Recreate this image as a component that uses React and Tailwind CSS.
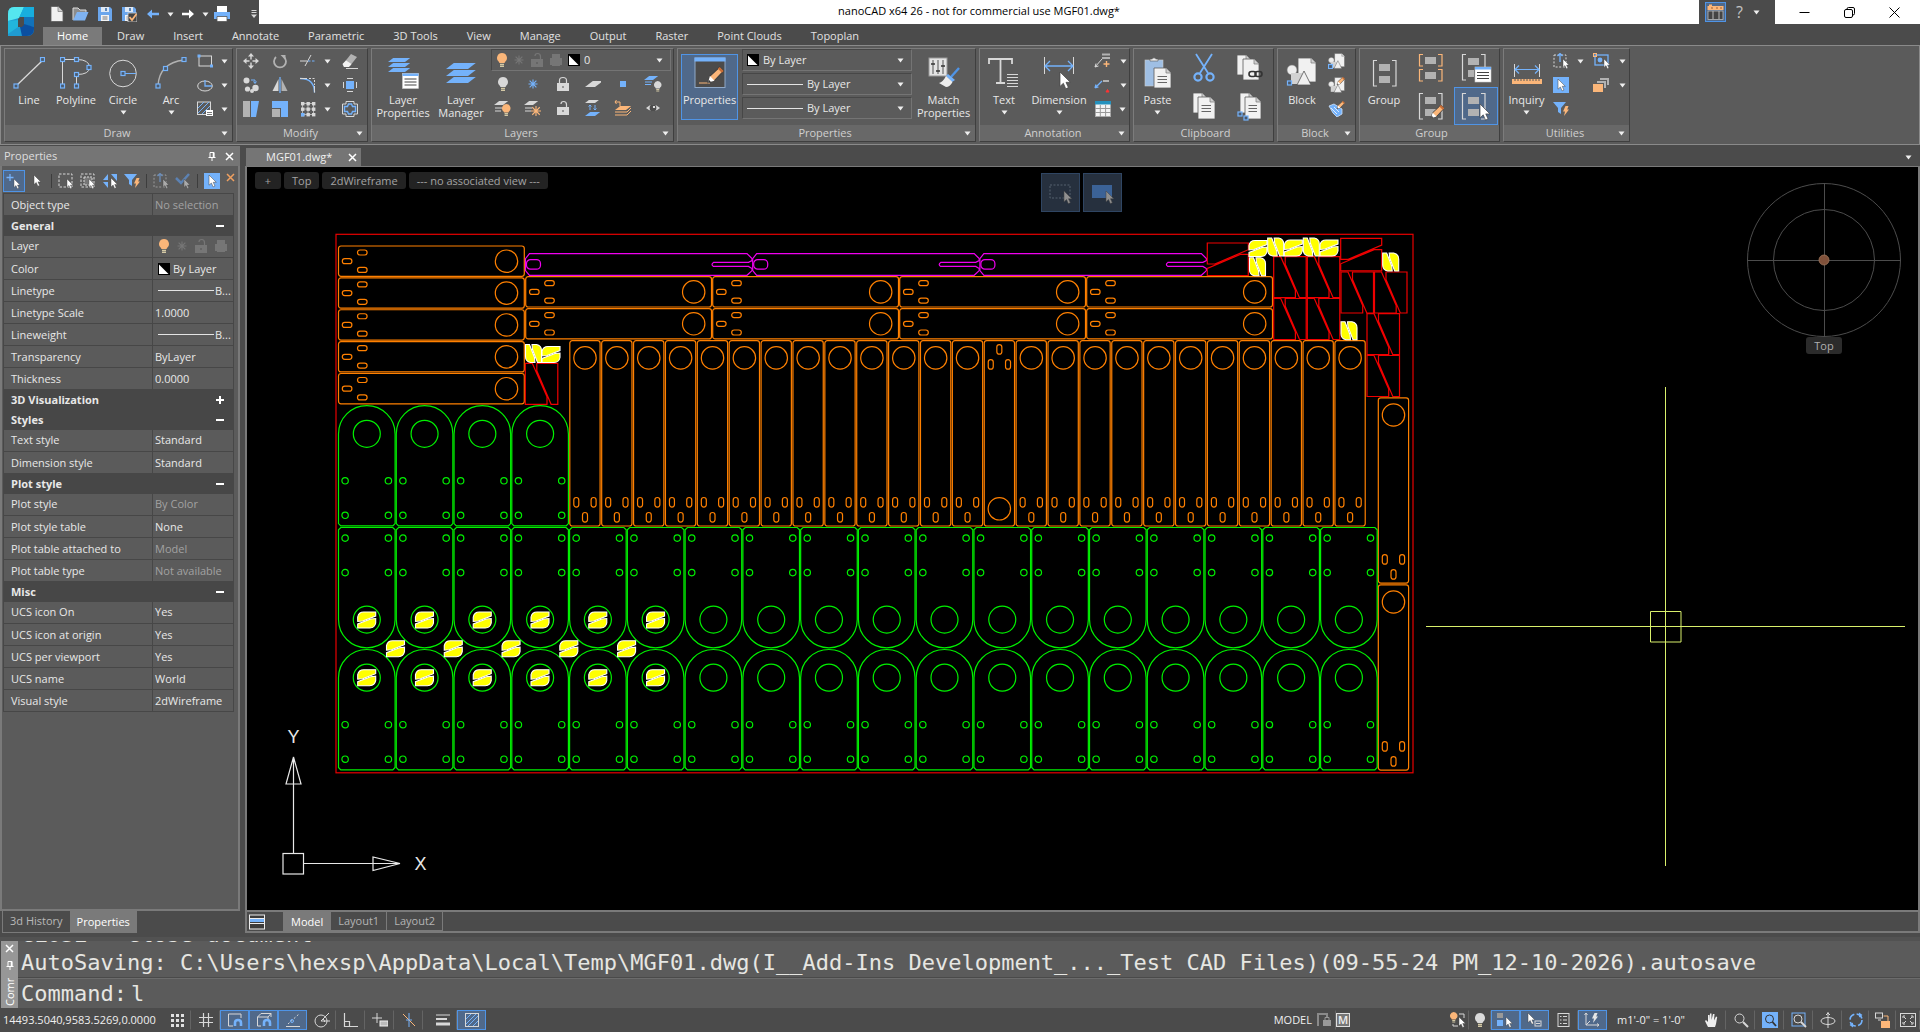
import clsx from 'clsx';

const BLUE = '#74b2fb';
const ORANGE = '#fbb679';
const LIGHT = '#d8d8d8';
const MID = '#b2b2b2';
const DIM = '#767676';

/* ---------- icon primitives ---------- */

function Svg({ w = 16, h = 16, children }) {
  return (
    <svg width={w} height={h} viewBox={`0 0 ${w} ${h}`} fill="none" stroke={LIGHT} className="shrink-0" aria-hidden="true">
      {children}
    </svg>
  );
}

const Node = ({ x, y }) => <rect x={x - 2} y={y - 2} width="4" height="4" fill="#4c5a6c" stroke={BLUE} strokeWidth="1.2" />;
const Cursor = ({ x = 0, y = 0, s = 1, fill = '#fff' }) => (
  <path transform={`translate(${x} ${y}) scale(${s})`} d="M0 0V12L2.8 9.4L4.8 14L7 13L5 8.6H8.6Z" fill={fill} stroke="#444" strokeWidth="0.6" />
);
const Page = ({ x, y, w = 16, h = 20, lines }) => (
  <g transform={`translate(${x} ${y})`}>
    <path d={`M0 0H${w - 5}L${w} 5V${h}H0Z`} fill="#f1f1f1" stroke="#5b5b5b" strokeWidth="0.8" />
    <path d={`M${w - 5} 0V5H${w}`} fill="#d0d0d0" stroke="#777" strokeWidth="0.7" />
    {lines && <path d={`M3.5 8.5H${w - 4}M3.5 11.5H${w - 4}M3.5 14.5H${w - 4}`} stroke="#666" />}
  </g>
);
const Pencil = ({ x = 0, y = 0, s = 1 }) => (
  <g transform={`translate(${x} ${y}) scale(${s})`} stroke="none">
    <path d="M0 12L1.5 7L9 0L12 3L5 10.5Z" fill={ORANGE} stroke="#3f3f3f" strokeWidth="0.8" />
    <path d="M9 0L12 3L10.6 4.4L7.6 1.4Z" fill="#c96d35" />
    <path d="M0 12L1.5 7L5 10.5Z" fill="#fff" />
    <path d="M0 12L0.6 9.8L2.2 11.4Z" fill="#333" />
  </g>
);
const Bolt = ({ x = 0, y = 0, fill = ORANGE }) => <path transform={`translate(${x} ${y})`} d="M2.5 0H5.5L4.2 3.6H6L1 10L2 5.4H0Z" fill={fill} stroke="none" />;
const ListSheet = ({ x, y }) => (
  <g transform={`translate(${x} ${y})`}>
    <rect width="16" height="15" fill="#fff" stroke="#ccc" strokeWidth="0.6" />
    <rect width="16" height="2.5" fill={BLUE} stroke="none" />
    <path d="M2 5.5H14M2 8.5H14M2 11.5H14" stroke="#444" />
  </g>
);
const Sheet = ({ x, y, w = 14, h = 4, fill = BLUE }) => <path transform={`translate(${x} ${y})`} d={`M${h * 1.3} 0H${w + h * 1.3}L${w} ${h}H0Z`} fill={fill} stroke="none" />;
const BulbShape = ({ x = 0, y = 0, s = 1, fill = ORANGE }) => (
  <g transform={`translate(${x} ${y}) scale(${s})`} stroke="none">
    <path d="M5 0A5 5 0 0 1 8.2 8.8Q7.8 9.4 7.6 10H2.4Q2.2 9.4 1.8 8.8A5 5 0 0 1 5 0Z" fill={fill} />
    <path d="M3 10.7H7V12H3ZM3 12.6H7V14H3Z" fill="#d4c9a5" />
  </g>
);
const Star = ({ x, y, r = 4.5, c }) => (
  <path transform={`translate(${x} ${y})`} d={`M0 ${-r}V${r}M${-r} 0H${r}M${-r * 0.75} ${-r * 0.75}L${r * 0.75} ${r * 0.75}M${-r * 0.75} ${r * 0.75}L${r * 0.75} ${-r * 0.75}`} stroke={c} strokeWidth="1.1" />
);

const Caret = () => (
  <svg width="7" height="5" viewBox="0 0 7 5" className="shrink-0" aria-hidden="true"><path d="M0.5 0.5H6.5L3.5 4.5Z" fill="#efefef" /></svg>
);

/* ---------- icons ---------- */

const Bulb = ({ fill }) => <Svg w={12} h={16}><BulbShape x={1} y={1} fill={fill} /></Svg>;
const Sun = ({ c = DIM }) => <Svg w={12} h={12}><Star x={6} y={6} c={c} /></Svg>;
const Lock = ({ open, c = DIM }) => (
  <Svg w={14} h={16}>
    <rect x="1" y="7" width="12" height="8" fill={c} stroke="none" />
    <path d={open ? 'M5 4Q5 1.5 7.5 1.5Q10.5 1.5 10.5 4.5V7' : 'M3.5 7V4.5Q3.5 1.5 7 1.5Q10.5 1.5 10.5 4.5V7'} stroke={c} strokeWidth="1.2" />
    <path d="M7 10V12" stroke="#555" />
  </Svg>
);
const Plot = () => <Svg w={14} h={14}><path d="M3 1H11V5H13V12H11V13H3V12H1V5H3Z" fill={DIM} stroke="none" /></Svg>;
const Swatch = () => (
  <svg width="12" height="12" viewBox="0 0 12 12" className="shrink-0" aria-hidden="true"><rect width="12" height="12" fill="#000" /><path d="M1 1.5V11H10.5Z" fill="#fff" /></svg>
);

const LineIcon = () => <Svg w={32} h={32}><path d="M3 29L30 3" strokeWidth="1.3" /><Node x={3} y={29} /><Node x={29.5} y={2.5} /></Svg>;
const PolylineIcon = () => (
  <Svg w={32} h={32}>
    <path d="M2.5 29V2.5H16.5Q29.5 2.5 29.5 10.5Q29.5 17.5 16.5 17.5V29" />
    <Node x={2.5} y={2.5} /><Node x={16.5} y={2.5} /><Node x={29} y={10.5} /><Node x={16.5} y={17.5} /><Node x={16.5} y={29} /><Node x={2.5} y={29} />
  </Svg>
);
const CircleIcon = () => <Svg w={32} h={32}><circle cx="16" cy="16.5" r="13.3" /><path d="M16 16.5H29" stroke={BLUE} /><Node x={16} y={16.5} /></Svg>;
const ArcIcon = () => <Svg w={32} h={32}><path d="M3 29Q4 6 29 3" stroke={MID} strokeWidth="1.4" /><Node x={3} y={29} /><Node x={10.5} y={11.5} /><Node x={29} y={2.5} /></Svg>;
const RectIcon = () => <Svg><rect x="2" y="3" width="12.5" height="10" /><rect x="0.5" y="1.5" width="3" height="3" fill={BLUE} stroke="none" /><rect x="13" y="11.5" width="3" height="3" fill={BLUE} stroke="none" /></Svg>;
const EllipseIcon = () => <Svg><ellipse cx="8" cy="9" rx="7.3" ry="5" /><path d="M8 3V9H15" stroke={BLUE} strokeWidth="1.3" /></Svg>;
const HatchIcon = () => (
  <Svg>
    <rect x="0.5" y="1" width="13" height="12.5" />
    <path d="M1 7L7 1M1 12L12 1M5 13L13 5" stroke={BLUE} />
    <rect x="9" y="9" width="7" height="6" fill="#fff" stroke="none" /><path d="M10 11.5H15M10 13.5H15" stroke="#555" strokeWidth="0.8" />
  </Svg>
);

const MoveIcon = () => <Svg><path d="M8 2V14M2 8H14" strokeWidth="1.4" strokeDasharray="4.5 3" /><path d="M8 0L11 3.5H5ZM8 16L11 12.5H5ZM0 8L3.5 5V11ZM16 8L12.5 5V11Z" fill={LIGHT} stroke="none" /></Svg>;
const RotateIcon = () => <Svg><path d="M4 4A6 6 0 1 0 12 4" stroke={MID} strokeWidth="1.8" /><path d="M8.5 2H13.5V7Z" fill={MID} stroke="none" /></Svg>;
const TrimIcon = () => <Svg><path d="M0 8H7M5 13L11 2" /><path d="M8 8H16" stroke={BLUE} strokeDasharray="2.5 1.5" /></Svg>;
const EraseIcon = () => <Svg><path d="M1 11L9 1L15 4L8 13L2 14Z" fill={MID} stroke="none" /><path d="M0.5 11L4 7.5L9.5 11L7 14H2Z" fill="#f2f2f2" stroke="none" /><path d="M4 15.5H16" /></Svg>;
const CopyIcon = () => <Svg><g fill={LIGHT} stroke="none"><circle cx="3.5" cy="3.5" r="3" /><circle cx="4.5" cy="12" r="2.6" /><circle cx="12.5" cy="11" r="3.2" /><circle cx="9" cy="14" r="2" /></g><path d="M8 3H12V6M10.5 4.5L12 6.5L13.5 4.5" stroke={BLUE} /></Svg>;
const MirrorIcon = () => <Svg><path d="M6.5 2V14H0.5Z" fill={LIGHT} stroke="none" /><path d="M9.5 2V14H15.5Z" fill={MID} stroke="none" /><path d="M8 0V16" stroke={BLUE} strokeWidth="1.3" /></Svg>;
const FilletIcon = () => <Svg><path d="M0 1.5Q14.5 1.5 14.5 15.5" stroke={BLUE} strokeWidth="1.4" /><path d="M0 1.5H7M14.5 9V15.5" /><path d="M9 1.5H14.5V8" strokeDasharray="2 1.5" /></Svg>;
const StretchIcon = () => <Svg><rect x="4" y="4" width="8" height="8" fill={BLUE} stroke="none" /><path d="M5 1.5H11M5 14.5H11M1.5 5V11M14.5 5V11" stroke={LIGHT} /></Svg>;
const FlexIcon = () => <Svg><rect x="0" y="0" width="7" height="16" fill={MID} stroke="none" /><path d="M8 0H16L13 16H8Z" fill={BLUE} stroke="none" /></Svg>;
const ScaleIcon = () => <Svg><path d="M0 0H16V16H9V7H0Z" fill={BLUE} stroke="none" /><rect x="0" y="8" width="8" height="8" fill={MID} stroke="none" /></Svg>;
const ArrayIcon = () => (
  <Svg>
    <path d="M2.5 2.5H13.5V13.5H2.5ZM8 2V14M2 8H14" stroke={MID} />
    <g fill={LIGHT} stroke="none">{[1, 6.5, 12].map((x) => [1, 6.5, 12].map((y) => <rect key={x + '-' + y} x={x} y={y} width="3.4" height="3.4" />))}</g>
    <rect x="1" y="12" width="3.4" height="3.4" fill={BLUE} stroke="none" />
  </Svg>
);
const OffsetIcon = () => (
  <Svg>
    <path d="M0.5 3H4V0.5H12V3H15.5V13H12V15.5H4V13H0.5Z" strokeLinejoin="round" />
    <path d="M2.5 5.5H5.5L6.5 3H9.5L10.5 5.5H13.5V10.5H10.5L9.5 13H6.5L5.5 10.5H2.5Z" stroke={BLUE} strokeWidth="1.4" />
  </Svg>
);

const LayerPropsIcon = () => <Svg w={32} h={32}><Sheet x={1} y={11} w={17} h={4} /><Sheet x={1} y={6} w={17} h={4} /><Sheet x={1} y={1} w={17} h={4} /><ListSheet x={15.5} y={16.5} /></Svg>;
const LayerManagerIcon = () => <Svg w={32} h={32}><Sheet x={1} y={20} w={22} h={6} /><Sheet x={1} y={13} w={22} h={6} /><Sheet x={1} y={6} w={22} h={6} /></Svg>;
const FrozenSheet = () => <Svg><Sheet x={0} y={5} w={10} h={6} fill={LIGHT} /></Svg>;
const SquareDot = () => <Svg><rect x="5" y="5" width="6" height="6" fill={BLUE} stroke="none" /></Svg>;
const LayerBulb = () => <Svg w={18} h={18}><Sheet x={0} y={1} w={9} h={4} /><path d="M1 7H8M1 9.5H7" stroke={BLUE} /><BulbShape x={10} y={6} s={0.75} fill={LIGHT} /></Svg>;
const LayerOn = () => <Svg w={18} h={18}><Sheet x={0} y={2} w={9} h={4} fill={LIGHT} /><path d="M1 9H8M1 12H7" /><BulbShape x={8} y={5} s={0.85} /></Svg>;
const LayerThaw = () => <Svg w={18} h={18}><Sheet x={0} y={2} w={9} h={4} fill={LIGHT} /><path d="M1 9H8M1 12H7" /><Star x={12} y={12} r={5} c={ORANGE} /></Svg>;
const LayerSwap = () => <Svg w={16} h={18}><Sheet x={0} y={1} w={10} h={3} fill={LIGHT} /><Sheet x={0} y={13} w={10} h={4} /><path d="M5 11V6M3.5 7.5L5 6L6.5 7.5M10 6V11M8.5 9.5L10 11L11.5 9.5" stroke={BLUE} /></Svg>;
const LayerBack = () => <Svg w={18} h={18}><path d="M1 3H6V7M2.5 1L1 3L2.5 5" stroke={ORANGE} /><Sheet x={1} y={7} w={11} h={4} fill={ORANGE} /><path d="M1 13H13L17 9M1 16H13L17 12" stroke={ORANGE} /></Svg>;
const Eye = () => <Svg><path d="M1 8Q8 1.5 15 8Q8 14.5 1 8Z" fill={LIGHT} stroke="none" /><circle cx="8" cy="8" r="3.4" fill="#4c4c4c" stroke="none" /><circle cx="9" cy="7" r="1.1" fill="#fff" stroke="none" /></Svg>;

const PropertiesIcon = () => <Svg w={32} h={32}><rect x="1" y="1" width="30" height="29.5" fill="#4b4b4b" stroke="#8fa9c8" /><rect x="0.5" y="0.5" width="31" height="4" fill={BLUE} stroke="none" /><path d="M5 26H16" stroke={ORANGE} /><Pencil x={14} y={10} s={1.3} /></Svg>;
const MatchIcon = () => (
  <Svg w={32} h={32}>
    <rect x="1" y="1" width="18" height="18" fill="#e4e4e4" stroke="#999" />
    <path d="M5 3V17M10 3V17M15 3V17" stroke="#555" /><path d="M3 7H7M8 14H12M13 9H17" stroke="#333" strokeWidth="1.6" />
    <path d="M31 11L23 20" stroke="#4f94e6" strokeWidth="2.4" /><path d="M20 17L27 23L24 25L18 19Z" fill={BLUE} stroke="none" /><path d="M18 19L24.5 25Q22 30 18 30L11 26Q15 25 18 19Z" fill="#eee" stroke="none" />
  </Svg>
);
const TextIcon = () => <Svg w={32} h={32}><path d="M1 7V2H24V7M12.5 2V26M8 26H17" stroke={LIGHT} strokeWidth="1.8" /><path d="M19 17.5H30M19 20.5H30M19 23.5H30M19 26.5H30M19 29.5H30" /></Svg>;
const DimensionIcon = () => <Svg w={32} h={32}><path d="M1.5 0V17M30.5 0V17" /><path d="M2 9H30M7 4L2 9L7 14M25 4L30 9L25 14" stroke={BLUE} strokeWidth="1.3" /><Cursor x={17} y={15} s={1.2} /></Svg>;
const LeaderAdd = () => <Svg w={18}><path d="M1 14L8 6M1 14L2 10.5M1 14L4.5 13" /><path d="M8 5H16M8 1.5H16" stroke={MID} strokeWidth="2" /><path d="M12.5 8V14M9.5 11H15.5" stroke={ORANGE} strokeWidth="1.4" /></Svg>;
const Leader = () => <Svg w={18}><path d="M1 11L8 4M1 11L2 7.5M1 11L4.5 10" stroke={BLUE} strokeWidth="1.3" /><path d="M9 4H15" stroke={MID} strokeWidth="2" /><path d="M12 15L13.5 12.5L15 15Z" fill="#f33" stroke="#f33" /></Svg>;
const TableIcon = () => <Svg><rect x="0.5" y="0.5" width="15" height="15" fill="#f4f4f4" stroke="#aaa" /><rect x="0" y="0" width="16" height="3.5" fill="#2491bd" stroke="none" /><path d="M0 7.5H16M0 11.5H16M5.3 4V16M10.6 4V16" stroke="#999" /></Svg>;

const PasteIcon = () => <Svg w={32} h={32}><rect x="3" y="3" width="18" height="26" fill="#9fbfe4" stroke="#ccc" strokeWidth="0.6" /><path d="M8 4H16V2H14Q12 -0.5 10 2H8Z" fill="#eee" stroke="#555" strokeWidth="0.6" /><Page x={12} y={11} w={17} h={20} lines /></Svg>;
const CutIcon = () => <Svg w={26} h={30}><path d="M5 1L17 20M21 1L9 20" stroke={BLUE} strokeWidth="1.8" /><circle cx="7" cy="24" r="3.6" stroke={BLUE} strokeWidth="2.2" /><circle cx="19" cy="24" r="3.6" stroke={BLUE} strokeWidth="2.2" /></Svg>;
const CopyLink = () => <Svg w={28} h={30}><Page x={1} y={2} w={14} h={20} /><Page x={7} y={6} w={16} h={21} /><rect x="13" y="18.5" width="7" height="5" rx="2.5" stroke="#333" strokeWidth="1.6" /><rect x="19" y="18.5" width="7" height="5" rx="2.5" stroke="#333" strokeWidth="1.6" /></Svg>;
const CopyClip = () => <Svg w={26} h={30}><Page x={2} y={2} w={14} h={20} /><Page x={7} y={6} w={17} h={22} lines /></Svg>;
const CopyBase = () => <Svg w={28} h={30}><Page x={4} y={2} w={14} h={20} /><Page x={9} y={6} w={16} h={22} lines /><Node x={4} y={23} /><Node x={10} y={27} /></Svg>;
const BlockShapes = ({ s = 1 }) => (
  <g transform={`scale(${s})`}>
    <Page x={12} y={1} w={18} h={24} />
    <circle cx="6" cy="13" r="5" fill="#ededed" stroke="#777" strokeWidth="0.6" /><path d="M5 16H16V27H5Z" fill="#d2d2d2" stroke="none" /><path d="M18 14L25 28H11Z" fill="#f0f0f0" stroke="#555" strokeWidth="0.8" />
  </g>
);
const BlockIcon = () => <Svg w={32} h={32}><BlockShapes /><Node x={3.5} y={26} /></Svg>;
const BlockInsert = () => <Svg w={18}><BlockShapes s={0.55} /><Node x={2.5} y={13.5} /></Svg>;
const BlockEdit = () => <Svg w={18}><BlockShapes s={0.55} /><Pencil x={9} y={0} s={0.65} /></Svg>;
const BlockAttr = () => <Svg w={18}><path d="M1 5L6 3L14 8V13L9 16L5 12Z" fill={BLUE} stroke="#cfe3fb" strokeWidth="0.8" /><path d="M3 7L9 13M6 6L11 11" stroke="#dcebff" /><Pencil x={9} y={0} s={0.65} /></Svg>;
const Brackets = ({ c = LIGHT, w = 23, h = 26 }) => <path d={`M4 0.5H0.5V${h}H4M${w - 4} 0.5H${w}V${h}H${w - 4}`} stroke={c} strokeWidth="1.2" />;
const GroupIcon = () => <Svg w={32} h={32}><g transform="translate(5 3)"><Brackets /><path d="M6 4H17V11H6ZM6 16H17V23H6Z" fill={MID} stroke="none" /></g></Svg>;
const Ungroup = () => <Svg w={26} h={30}><g transform="translate(1 1)"><Brackets c={ORANGE} h={12} /><path d="M6 3H17V10H6Z" fill={MID} stroke="none" /></g><g transform="translate(1 16)"><Brackets c={ORANGE} h={12} /><path d="M6 3H17V10H6Z" fill={MID} stroke="none" /></g></Svg>;
const GroupEdit = () => <Svg w={26} h={30}><g transform="translate(1 2)"><Brackets /><path d="M6 4H17V11H6ZM6 16H17V23H6Z" fill={MID} stroke="none" /></g><Pencil x={13} y={14} s={1.1} /></Svg>;
const GroupList = () => <Svg w={32} h={30}><g transform="translate(2 1)"><Brackets /><path d="M6 4H17V11H6ZM6 16H12V23H6Z" fill={MID} stroke="none" /></g><ListSheet x={15} y={14} /></Svg>;
const GroupSelect = () => <Svg w={32} h={30}><g transform="translate(2 2)"><Brackets /><path d="M6 4H17V11H6ZM6 16H17V23H6Z" fill={MID} stroke="none" /></g><Cursor x={20} y={13} s={1.15} /></Svg>;
const InquiryIcon = () => <Svg w={32} h={32}><path d="M3.5 7V20M28.5 7V20" /><path d="M4 12.5H28M8 8.5L4 12.5L8 16.5M24 8.5L28 12.5L24 16.5" stroke={BLUE} strokeWidth="1.2" /><rect x="1" y="22" width="30" height="5" fill={ORANGE} stroke="none" /><path d="M4 22V24M7 22V24M10 22V24M13 22V24M16 22V24M19 22V24M22 22V24M25 22V24M28 22V24" stroke="#5b5b5b" /></Svg>;
const SelectUp = ({ dim }) => <Svg><rect x="1" y="2" width="12" height="12" stroke={dim ? '#999' : LIGHT} strokeDasharray="2 1.6" /><path d="M7 9V0M4.5 3L7 0.5L9.5 3" stroke={dim ? '#6b8db8' : BLUE} strokeWidth="1.3" /><Cursor x={10} y={6} s={0.7} fill={dim ? '#aaa' : '#fff'} /></Svg>;
const SelectBox = () => <Svg><rect width="16" height="16" fill={BLUE} stroke="none" /><Cursor x={5} y={2} s={0.85} /></Svg>;
const FilterBolt = () => <Svg><path d="M0 1H13L8 7V13L5 11V7Z" fill={BLUE} stroke="none" /><Bolt x={10} y={5} /></Svg>;
const SelectRect = () => <Svg w={18}><rect x="2" y="2" width="13" height="10" stroke={BLUE} strokeWidth="1.3" /><rect x="0.5" y="0.5" width="3" height="3" stroke={ORANGE} /><circle cx="7" cy="7" r="2.4" fill={BLUE} stroke="none" /><Cursor x={11} y={6} s={0.7} /></Svg>;
const Order = () => <Svg w={18}><path d="M7 1H16V8H14V3H7Z" fill={MID} stroke="none" /><path d="M4 4H13V11H11V6H4Z" fill={MID} stroke="none" /><rect x="0" y="7" width="10" height="8" fill={ORANGE} stroke="none" /></Svg>;

/* ---------- ribbon ---------- */

function Big({ icon: Icon, label, lines, caret, active, className }) {
  return (
    <button className={clsx('flex flex-col items-center', active ? 'border border-[#4f94e6] bg-[#50698a] pt-[2px]' : 'pt-2', className)}>
      <Icon />
      <span className="mt-1 whitespace-nowrap leading-[13px]">
        {lines ? lines.map((l) => <span key={l} className="block">{l}</span>) : label}
      </span>
      {caret && <span className="flex h-[13px] items-center"><Caret /></span>}
    </button>
  );
}

function Cell({ icon: Icon, name, caret, className, ...rest }) {
  return (
    <button title={name} aria-label={name} className={clsx('flex items-center justify-center', className || 'h-6')}>
      <Icon {...rest} />
      {caret && <span className="ml-2"><Caret /></span>}
    </button>
  );
}

function Panel({ title, more = true, className, children }) {
  return (
    <section className={clsx('flex shrink-0 flex-col border border-[#3f3f3f] border-l-[#7c7c7c] border-t-[#7c7c7c]', className)}>
      <div className="flex h-[77px]">{children}</div>
      <div className="flex h-4 items-center bg-[#686868] pr-1 text-[#cfcfcf]">
        <h2 className="flex-1 pl-2 text-center">{title}</h2>
        {more && <Caret />}
      </div>
    </section>
  );
}

function Combo({ name, value, before }) {
  return (
    <div className="flex h-[22px] items-center gap-1 border border-[#747474] border-l-[#474747] border-t-[#474747] px-1">
      {before}
      <select aria-label={name} className="min-w-0 flex-1 appearance-none bg-transparent text-[#e8e8e8] outline-none">
        <option>{value}</option>
      </select>
      <span className="px-[3px]"><Caret /></span>
    </div>
  );
}

const Rule = ({ className }) => <span className={clsx('h-px shrink-0 bg-[#e4e4e4]', className)} />;

function Ribbon() {
  return (
    <div className="flex h-[100px] shrink-0 gap-[3px] border border-[#8a8a8a] bg-[#5b5b5b] py-[2px] pl-[3px]">
      <Panel title="Draw" className="w-[229px]">
        <Big icon={LineIcon} label="Line" className="w-12" />
        <Big icon={PolylineIcon} label="Polyline" className="w-[46px]" />
        <Big icon={CircleIcon} label="Circle" caret className="w-12" />
        <Big icon={ArcIcon} label="Arc" caret className="w-12" />
        <div className="flex flex-col pl-[2px]">
          <Cell icon={RectIcon} name="Rectangle" caret />
          <Cell icon={EllipseIcon} name="Ellipse" caret />
          <Cell icon={HatchIcon} name="Hatch" caret />
        </div>
      </Panel>

      <Panel title="Modify" className="w-[132px]">
        <div className="grid grid-cols-[28px_30px_40px_30px] content-start">
          <Cell icon={MoveIcon} name="Move" />
          <Cell icon={RotateIcon} name="Rotate" />
          <Cell icon={TrimIcon} name="Trim" caret />
          <Cell icon={EraseIcon} name="Erase" />
          <Cell icon={CopyIcon} name="Copy" />
          <Cell icon={MirrorIcon} name="Mirror" />
          <Cell icon={FilletIcon} name="Fillet" caret />
          <Cell icon={StretchIcon} name="Explode" />
          <Cell icon={FlexIcon} name="Stretch" />
          <Cell icon={ScaleIcon} name="Scale" />
          <Cell icon={ArrayIcon} name="Array" caret />
          <Cell icon={OffsetIcon} name="Offset" />
        </div>
      </Panel>

      <Panel title="Layers" className="w-[303px]">
        <Big icon={LayerPropsIcon} lines={['Layer', 'Properties']} className="w-[62px]" />
        <Big icon={LayerManagerIcon} lines={['Layer', 'Manager']} className="w-[54px]" />
        <div className="flex flex-1 flex-col pr-[2px]">
          <div className="pl-[3px]">
            <Combo
              name="Current layer"
              value="0"
              before={<span className="flex items-center gap-[5px]"><Bulb fill={ORANGE} /><Sun /><Lock open /><Plot /><Swatch /></span>}
            />
          </div>
          <div className="grid grid-cols-[repeat(6,30px)] pt-px">
            <Cell icon={Bulb} name="Layer off" fill={LIGHT} />
            <Cell icon={Sun} name="Freeze" c={BLUE} />
            <Cell icon={Lock} name="Lock" c={LIGHT} />
            <Cell icon={FrozenSheet} name="Isolate" />
            <Cell icon={SquareDot} name="Make current" />
            <Cell icon={LayerBulb} name="Turn off others" />
            <Cell icon={LayerOn} name="All on" />
            <Cell icon={LayerThaw} name="Thaw all" />
            <Cell icon={Lock} name="Unlock" open c={LIGHT} />
            <Cell icon={LayerSwap} name="Match layer" />
            <Cell icon={LayerBack} name="Previous" />
            <Cell icon={Eye} name="Walk" />
          </div>
        </div>
      </Panel>

      <Panel title="Properties" className="w-[299px]">
        <div className="flex py-[5px] pl-[3px] pr-1">
          <Big icon={PropertiesIcon} label="Properties" active className="w-[57px]" />
        </div>
        <div className="flex w-[170px] flex-col gap-[2px]">
          <Combo name="Color" value="By Layer" before={<Swatch />} />
          <Combo name="Linetype" value="By Layer" before={<Rule className="w-14" />} />
          <Combo name="Lineweight" value="By Layer" before={<Rule className="w-14" />} />
        </div>
        <Big icon={MatchIcon} lines={['Match', 'Properties']} className="flex-1" />
      </Panel>

      <Panel title="Annotation" className="w-[151px]">
        <Big icon={TextIcon} label="Text" caret className="w-12" />
        <Big icon={DimensionIcon} label="Dimension" caret className="w-[62px]" />
        <div className="flex flex-col pl-1">
          <Cell icon={LeaderAdd} name="Multileader" caret />
          <Cell icon={Leader} name="Leader" caret />
          <Cell icon={TableIcon} name="Table" caret />
        </div>
      </Panel>

      <Panel title="Clipboard" more={false} className="w-[141px]">
        <Big icon={PasteIcon} label="Paste" caret className="w-12" />
        <div className="grid grid-cols-[46px_46px] grid-rows-2">
          <Cell icon={CutIcon} name="Cut" className="h-[38px]" />
          <Cell icon={CopyLink} name="Copy link" className="h-[38px]" />
          <Cell icon={CopyClip} name="Copy clip" className="h-[38px]" />
          <Cell icon={CopyBase} name="Copy with base point" className="h-[38px]" />
        </div>
      </Panel>

      <Panel title="Block" className="w-[79px]">
        <Big icon={BlockIcon} label="Block" className="w-12" />
        <div className="flex flex-col pl-[2px]">
          <Cell icon={BlockInsert} name="Insert block" />
          <Cell icon={BlockEdit} name="Edit block" />
          <Cell icon={BlockAttr} name="Edit attributes" />
        </div>
      </Panel>

      <Panel title="Group" more={false} className="w-[141px]">
        <Big icon={GroupIcon} label="Group" className="w-12" />
        <div className="grid grid-cols-[46px_44px] grid-rows-2">
          <Cell icon={Ungroup} name="Ungroup" className="h-[38px]" />
          <Cell icon={GroupList} name="Group manager" className="h-[38px]" />
          <Cell icon={GroupEdit} name="Edit group" className="h-[38px]" />
          <Cell icon={GroupSelect} name="Group selection" className="h-[38px] border border-[#4f94e6] bg-[#50698a]" />
        </div>
      </Panel>

      <Panel title="Utilities" className="w-[127px]">
        <Big icon={InquiryIcon} label="Inquiry" caret className="w-12" />
        <div className="grid grid-cols-[40px_36px] content-start justify-items-start pl-1">
          <Cell icon={SelectUp} name="Select" caret />
          <Cell icon={SelectRect} name="Quick select" caret />
          <Cell icon={SelectBox} name="Selection mode" />
          <Cell icon={Order} name="Draw order" caret />
          <Cell icon={FilterBolt} name="Filter" />
        </div>
      </Panel>
    </div>
  );
}

/* ---------- title bar and tabs ---------- */

const TABS = ['Home', 'Draw', 'Insert', 'Annotate', 'Parametric', '3D Tools', 'View', 'Manage', 'Output', 'Raster', 'Point Clouds', 'Topoplan'];

const Logo = () => (
  <svg width="26" height="29" viewBox="0 0 26 29" aria-hidden="true">
    <path d="M6 0H26V22Q26 29 19 29H0V7Q0 0 6 0Z" fill="#1f9bd1" />
    <path d="M6 0H16L11 11L0 14V7Q0 0 6 0Z" fill="#55e6ef" />
    <path d="M16 0H26V12L16 10L11 11Z" fill="#17aede" />
    <path d="M26 10V20L16 18V10Z" fill="#1272b9" />
    <path d="M26 20V22Q26 29 19 29H14L12 20L16 17Z" fill="#0b4fa0" />
    <path d="M0 14L10 13V20L0 27Z" fill="#22b6dc" />
    <path d="M12 10H16V18L14 20H10V12Z" fill="#4b4b4b" />
  </svg>
);
const Floppy = ({ check }) => (
  <Svg>
    <path d="M1 1H13L15 3V15H1Z" fill="#6ba6ec" stroke="none" /><rect x="4" y="1" width="8" height="5" fill="#dfe9f5" stroke="none" /><path d="M9 2V5" stroke="#3c6ea8" strokeWidth="1.6" />
    <rect x="4" y="9" width="8" height="6" fill="#f4f4f4" stroke="none" /><path d="M5.5 11H10.5M5.5 13H10.5" stroke="#777" />
    {check && <g><rect x="7" y="7" width="9" height="9" fill="#444" stroke={LIGHT} strokeWidth="0.8" /><path d="M8.5 11L11 14L15.5 8" stroke={ORANGE} strokeWidth="1.8" /></g>}
  </Svg>
);

function TopBar() {
  return (
    <header className="flex h-[45px] shrink-0 bg-[#4b4b4b]">
      <div className="flex w-[43px] justify-start pl-2 pt-[7px]"><Logo /></div>
      <div className="flex min-w-0 flex-1 flex-col">
        <div className="flex h-6">
          <div className="flex w-[216px] items-center pl-[6px] pt-1">
            <button aria-label="New"><Svg><Page x={2} y={0.5} w={12} h={15} /></Svg></button>
            <button aria-label="Open" className="ml-[7px]"><Svg w={17}><path d="M1 14V2H6L8 4H14V6" fill="#8c8c8c" stroke="#ddd" /><path d="M1 14.5L5 6H16.5L13 14.5Z" fill="#7fb3f2" stroke="none" /></Svg></button>
            <button aria-label="Save" className="ml-2"><Floppy /></button>
            <button aria-label="Save as" className="ml-2"><Floppy check /></button>
            <button aria-label="Undo" className="ml-[10px]"><Svg w={12}><path d="M0 8L5 3.5V6.8H12V9.2H5V12.5Z" fill={BLUE} stroke="none" /></Svg></button>
            <button aria-label="Undo list" className="ml-2"><Caret /></button>
            <button aria-label="Redo" className="ml-2"><Svg w={12}><path d="M12 8L7 3.5V6.8H0V9.2H7V12.5Z" fill="#fff" stroke="none" /></Svg></button>
            <button aria-label="Redo list" className="ml-2"><Caret /></button>
            <button aria-label="Print" className="ml-[5px]"><Svg><path d="M3 0H13V7H3Z" fill="#fff" stroke="none" /><path d="M0 6H16V13H0Z" fill={BLUE} stroke="none" /><path d="M3 10.5H13V15.5H3Z" fill="#fff" stroke="#555" strokeWidth="0.8" /></Svg></button>
            <button aria-label="Customize" className="ml-auto pr-[2px]"><Svg w={6} h={10}><path d="M0.5 1.5H5.5M0.5 3.5H5.5" /><path d="M0 5.5H6L3 9Z" fill={LIGHT} stroke="none" /></Svg></button>
          </div>
          <h1 className="flex flex-1 items-center justify-center bg-white pb-[2px] text-[11px] text-black">nanoCAD x64 26 - not for commercial use MGF01.dwg*</h1>
          <div className="flex w-[76px] items-center gap-[10px] pl-[6px]">
            <button aria-label="Ribbon" className="border border-[#4f94e6] bg-[#50698a] p-px">
              <Svg w={17} h={16}><rect x="1" y="7" width="15" height="8.5" fill="#444" stroke="#bbb" strokeWidth="0.8" /><path d="M6 7V15M12 7V15" stroke="#bbb" /><path d="M0.5 2H2V0.5H5V2H16.5V6H0.5Z" fill={ORANGE} stroke="none" /><path d="M4 4H6M9 4H11M13 4H15" stroke="#a15f2c" /></Svg>
            </button>
            <button className="text-base text-[#c4c4c4]">?</button>
            <button aria-label="Help menu"><Caret /></button>
          </div>
          <div className="flex w-[145px] items-center justify-between bg-white pl-6 pr-5 text-black">
            <button aria-label="Minimize"><svg width="11" height="11" viewBox="0 0 11 11"><path d="M0.5 5.5H10.5" stroke="#000" /></svg></button>
            <button aria-label="Restore"><svg width="11" height="11" viewBox="0 0 11 11" fill="none" stroke="#000"><rect x="0.5" y="2.5" width="8" height="8" rx="1.5" /><path d="M3 2.5V2Q3 0.5 4.5 0.5H9Q10.5 0.5 10.5 2V6.5Q10.5 8 9 8" /></svg></button>
            <button aria-label="Close"><svg width="11" height="11" viewBox="0 0 11 11"><path d="M0.5 0.5L10.5 10.5M10.5 0.5L0.5 10.5" stroke="#000" /></svg></button>
          </div>
        </div>
        <nav className="flex h-[21px] items-end gap-px">
          {TABS.map((t, i) => (
            <button key={t} className={clsx('h-[18px] px-[14px] leading-[18px]', i === 0 ? 'bg-[#7a7a7a] text-white' : 'text-[#e2e2e2]')}>{t}</button>
          ))}
        </nav>
      </div>
    </header>
  );
}

/* ---------- properties palette ---------- */

const LayerValue = () => <span className="flex items-center gap-[6px] pl-[3px]"><Bulb fill={ORANGE} /><Sun /><Lock open /><Plot /></span>;
const ColorValue = () => <span className="flex items-center gap-[3px] pl-[3px]"><Swatch />By Layer</span>;
const LineValue = () => <span className="flex items-center gap-px pl-[3px]"><Rule className="w-14" />B...</span>;

const GROUPS = [
  { title: 'General', rows: [['Layer', <LayerValue />], ['Color', <ColorValue />], ['Linetype', <LineValue />], ['Linetype Scale', '1.0000'], ['Lineweight', <LineValue />], ['Transparency', 'ByLayer'], ['Thickness', '0.0000']] },
  { title: '3D Visualization', closed: true, rows: [] },
  { title: 'Styles', rows: [['Text style', 'Standard'], ['Dimension style', 'Standard']] },
  { title: 'Plot style', rows: [['Plot style', 'By Color', true], ['Plot style table', 'None'], ['Plot table attached to', 'Model', true], ['Plot table type', 'Not available', true]] },
  { title: 'Misc', rows: [['UCS icon On', 'Yes'], ['UCS icon at origin', 'Yes'], ['UCS per viewport', 'Yes'], ['UCS name', 'World'], ['Visual style', '2dWireframe']] },
];

function Row({ name, value, dim }) {
  return (
    <tr className="h-[22px] border-b border-[#474747]">
      <th scope="row" className="border-r border-[#474747] p-0 pl-[7px] text-left font-normal">{name}</th>
      <td className={clsx('whitespace-nowrap border-r border-[#474747] p-0 pl-[2px]', dim && 'text-[#a2a2a2]')}>{value}</td>
    </tr>
  );
}

const Pin = () => <svg width="8" height="9" viewBox="0 0 8 9" fill="none" stroke="#fff"><path d="M2 0.5H6V5.5M2 0.5V5.5M0.5 5.5H7.5M4 6V9" /><path d="M5.5 0.5V5.5" strokeWidth="1.5" /></svg>;
const Cross = ({ c = '#fff' }) => <svg width="9" height="9" viewBox="0 0 9 9"><path d="M1 1L8 8M8 1L1 8" stroke={c} strokeWidth="1.5" /></svg>;
const Bar = () => <span className="h-[14px] w-px shrink-0 bg-[#3d3d3d]" />;

function Sidebar() {
  return (
    <aside className="flex w-[240px] shrink-0 flex-col">
      <div className="flex h-5 items-center gap-[9px] bg-[#757575] pl-1 pr-[6px] text-[#dedede]">
        <h2 className="flex-1">Properties</h2>
        <button aria-label="Pin"><Pin /></button>
        <button aria-label="Close palette"><Cross /></button>
      </div>
      <div className="flex flex-1 flex-col border-x-2 border-b-2 border-[#7a7a7a] bg-[#5b5b5b] pt-[3px]">
        <div className="flex h-6 items-center gap-[6px] pl-px">
          <button aria-label="Add to selection" className="flex h-[22px] w-[22px] shrink-0 items-center justify-center border border-[#4f94e6] bg-[#50698a]"><Svg><path d="M4 1V8M0.5 4.5H7.5" stroke={BLUE} strokeWidth="1.3" /><Cursor x={8} y={6} s={0.7} /></Svg></button>
          <button aria-label="Pick" className="-ml-[2px]"><Svg><Cursor x={5} y={2} s={0.8} /></Svg></button>
          <Bar />
          <button aria-label="Window select"><Svg><rect x="1" y="1" width="13" height="13" strokeDasharray="2.5 1.5" /><Cursor x={9} y={6} s={0.7} /></Svg></button>
          <button aria-label="Crossing select"><Svg><rect x="1" y="1" width="13" height="13" strokeDasharray="2.5 1.5" /><rect x="4" y="4" width="8" height="8" fill="#777" strokeDasharray="2 1" /><Cursor x={9} y={6} s={0.7} /></Svg></button>
          <button aria-label="Invert selection"><Svg><path d="M6 1V7L1 7ZM1 9H6V15ZM9 1H15V8Z" fill={BLUE} stroke="none" /><Cursor x={9} y={5} s={0.75} /></Svg></button>
          <button aria-label="Quick filter"><FilterBolt /></button>
          <Bar />
          <button aria-label="Select previous"><SelectUp dim /></button>
          <button aria-label="Apply"><Svg><path d="M1 5L6 10L14 1" stroke="#5c82b3" strokeWidth="2.5" /><Cursor x={9} y={6} s={0.7} fill="#aaa" /></Svg></button>
          <Bar />
          <button aria-label="Selection mode"><SelectBox /></button>
          <button aria-label="Clear selection" className="self-start pt-1"><Cross c="#f0a060" /></button>
        </div>
        <table className="mx-px w-[231px] table-fixed border-collapse border-l border-t border-[#474747] leading-4 text-[#e8e8e8]">
          <colgroup><col className="w-[149px]" /><col /></colgroup>
          <tbody><Row name="Object type" value="No selection" dim /></tbody>
          {GROUPS.map((g) => (
            <tbody key={g.title}>
              <tr className="h-5 bg-[#474747]">
                <th scope="rowgroup" className="p-0 pl-[7px] text-left font-bold">{g.title}</th>
                <td className="p-0 pr-[10px]">
                  <button aria-label={`Toggle ${g.title}`} className="ml-auto block">
                    <svg width="8" height="8" viewBox="0 0 8 8" stroke="#fff" strokeWidth="2"><path d={g.closed ? 'M0 4H8M4 0V8' : 'M0 4H8'} /></svg>
                  </button>
                </td>
              </tr>
              {g.rows.map(([name, value, dim]) => <Row key={name} name={name} value={value} dim={dim} />)}
            </tbody>
          ))}
        </table>
      </div>
      <div className="flex h-[22px] pl-[2px]">
        <button className="border-b border-l border-[#7a7a7a] px-[7px] text-[#b9b9b9]">3d History</button>
        <button className="bg-[#7a7a7a] px-[7px] text-white">Properties</button>
      </div>
    </aside>
  );
}

/* ---------- nesting layout on the drawing area ---------- */

const OR = '#ff8000';
const GR = '#00f000';
const PITCH = 57.77;
const STRIP = 31.88;
const range = (n) => Array.from({ length: n }, (_, i) => i);

// flat strip, hole on the right, three slots on the left
const Strip = ({ x, y }) => (
  <g transform={`translate(${x} ${y})`}>
    <rect width="185.8" height="30.3" rx="2.5" />
    <circle cx="168" cy="15.2" r="11.2" />
    <rect x="3.8" y="12.7" width="9.6" height="5" rx="2.5" />
    <rect x="19" y="4" width="9.6" height="5" rx="2.5" />
    <rect x="19" y="21.4" width="9.6" height="5" rx="2.5" />
  </g>
);
const Upright = ({ x, y, flip }) => (
  <g transform={flip ? `translate(${x + 30.3} ${y + 185.3}) rotate(180)` : `translate(${x} ${y})`}>
    <rect width="30.3" height="185.3" rx="2.5" />
    <circle cx="15.2" cy="17.2" r="11.2" />
    <rect x="4" y="156.8" width="5" height="9.6" rx="2.5" />
    <rect x="21.3" y="156.8" width="5" height="9.6" rx="2.5" />
    <rect x="12.7" y="171.8" width="5" height="9.6" rx="2.5" />
  </g>
);
const Arch = ({ x, y, flip }) => (
  <g transform={flip ? `translate(${x} ${y + 120.3}) scale(1 -1)` : `translate(${x} ${y})`}>
    <path d="M0 28.3A28.3 28.3 0 0 1 56.6 28.3V118L54.3 120.3H2.3L0 118Z" />
    <circle cx="28.3" cy="28.2" r="13.5" />
    {[6.6, 49.9].map((cx) => [75.2, 109.7].map((cy) => <circle key={cx + '/' + cy} cx={cx} cy={cy} r="3.2" />))}
  </g>
);
const Wedges = ({ x, y, turn }) => (
  <g transform={turn ? `translate(${x} ${y + 32.5}) rotate(-90)` : `translate(${x} ${y})`}>
    {turn ? (
      <path d="M0 0H7L21.2 33.5V41H0ZM11.5 0H32.5V41H25.8L11.5 7.5Z" />
    ) : (
      <path d="M0 0H7L21.7 33.5V41H0ZM11.5 0H32.5V41H25.8L11.5 7.5Z" />
    )}
  </g>
);
const Mark = ({ x, y, turn }) => (
  <g transform={`translate(${x} ${y}) ${turn ? 'rotate(90)' : ''}`} fill="#ff0" stroke="#fff" strokeWidth="1.1">
    <path d="M-9 1.5V-3Q-8 -8 -3 -8H9V-4L-4 1Z" />
    <path d="M9 -1.5V3Q8 8 3 8H-9V4L4 -1Z" />
  </g>
);

const WEDGES = [[525.3, 363.3], [1273.7, 256.7], [1307.3, 256.7], [1273.7, 298.5], [1307.3, 298.5], [1341, 272], [1374.5, 272], [1367, 313.7], [1367, 355.5]];
const MARKS = [
  [533.5, 353.5, 1], [551, 354.5], [1258, 248.5], [1275.7, 247, 1], [1293.3, 248], [1311.3, 247, 1], [1329, 248],
  [1257.5, 266.7, 1], [1390.7, 262, 1], [1349, 330.7, 1],
];

function Drawing() {
  return (
    <svg className="absolute inset-0 h-full w-full" fill="none" aria-label="MGF01 sheet layout">
      <g transform="translate(-247 -167)" strokeWidth="1.2">
        <rect x="336" y="234.3" width="1077" height="538.5" stroke="#e80000" />
        <g stroke={OR}>
          {range(5).map((i) => <Strip key={i} x={338.5} y={246 + i * STRIP} />)}
          {range(8).map((i) => <Strip key={i} x={525.7 + (i % 4) * 187} y={276.7 + (i > 3 ? STRIP : 0)} />)}
          {range(25).map((i) => <Upright key={i} x={569.8 + i * STRIP} y={340.7} flip={i === 13} />)}
          <Upright x={1378.3} y={397.8} />
          <Upright x={1378.3} y={584.8} />
        </g>
        <g stroke={GR}>
          {range(4).map((i) => <Arch key={i} x={338.5 + i * PITCH} y={405.6} />)}
          {range(18).map((i) => <Arch key={i} x={338.5 + i * PITCH} y={527.5} flip />)}
          {range(18).map((i) => <Arch key={i} x={338.5 + i * PITCH} y={649.5} />)}
        </g>
        <g stroke="#f000f0">
          {range(3).map((i) => (
            <g key={i} transform={`translate(${525.5 + i * 227.2} 253.6)`}>
              <path d="M4 0H221.5L226.5 5V7L223 8.8H188Q185 10.8 188 12.8H223L226.5 15V17L221.5 21.7H4L0 17V5Z" />
              <rect x="1" y="6" width="14" height="9.6" rx="4" />
            </g>
          ))}
        </g>
        <g stroke="#f00000">
          {WEDGES.map(([x, y]) => <Wedges key={x + '/' + y} x={x} y={y} />)}
          <Wedges x={1207.3} y={243} turn />
          <Wedges x={1340.7} y={238.3} turn />
        </g>
        {MARKS.map(([x, y, turn]) => <Mark key={x + '/' + y} x={x} y={y} turn={turn} />)}
        {range(6).map((i) => <Mark key={i} x={366.7 + i * PITCH} y={620} />)}
        {range(6).map((i) => <Mark key={i} x={366.7 + i * PITCH} y={677.7} />)}
        {range(5).map((i) => <Mark key={i} x={395.5 + i * PITCH} y={648.7} />)}

        {/* UCS icon */}
        <g stroke="#e8e8e8" strokeWidth="1.2">
          <rect x="283" y="853.5" width="20.5" height="20.5" />
          <path d="M293.5 853.5V757L286 784H301L293.5 757M303.5 863.5H400L373 857V870.5L400 863.5" />
        </g>
        <g className="fill-[#e8e8e8] font-['Liberation_Sans'] text-[18px]" textAnchor="middle">
          <text x="293.5" y="743">Y</text>
          <text x="420.5" y="870">X</text>
        </g>

        <path d="M1426 626.5H1905M1665.5 387V866M1650.5 611.5H1681V642H1650.5Z" stroke="#d9f06c" strokeWidth="1" />
      </g>
    </svg>
  );
}

function Viewport() {
  return (
    <div className="relative flex-1 overflow-hidden bg-black">
      <Drawing />
      <div className="absolute left-2 top-[5px] flex gap-[3px] leading-[17px] text-[#a4a4a4]">
        {['+', 'Top', '2dWireframe', '--- no associated view ---'].map((t) => (
          <button key={t} className="min-w-[26px] rounded-[3px] bg-[#232323] px-2">{t}</button>
        ))}
      </div>
      <div className="absolute left-[794px] top-[6px] flex gap-[3px]">
        <button aria-label="Window selection" className="flex h-[39px] w-[39px] items-center justify-center border border-[#2f4562] bg-[#26303e]">
          <Svg w={26} h={24}><rect x="2" y="4" width="20" height="13" stroke="#55606e" strokeDasharray="2 1.5" /><Cursor x={16} y={10} s={0.9} fill="#8f8f8f" /></Svg>
        </button>
        <button aria-label="Crossing selection" className="flex h-[39px] w-[39px] items-center justify-center border border-[#2f4562] bg-[#26303e]">
          <Svg w={26} h={24}><rect x="2" y="4" width="20" height="13" fill="#3b6296" stroke="none" /><Cursor x={16} y={10} s={0.9} fill="#8f8f8f" /></Svg>
        </button>
      </div>
      <div className="absolute right-[17px] top-[16px] flex flex-col items-center">
        <svg width="154" height="154" viewBox="0 0 154 154" fill="none" stroke="#4c4c4c">
          <circle cx="77" cy="77" r="76.5" /><circle cx="77" cy="77" r="50.5" />
          <path d="M77.5 0V154M0 77.5H154" />
          <circle cx="77" cy="77" r="5" fill="#80513a" stroke="#a0765c" strokeWidth="0.8" />
        </svg>
        <button className="rounded-[3px] bg-[#2b2b2b] px-2 leading-[17px] text-[#b0b0b0]">Top</button>
      </div>
    </div>
  );
}

function Workspace() {
  return (
    <main className="flex min-w-0 flex-1 flex-col pl-[5px] pt-[2px]">
      <div className="flex h-[19px] items-stretch border-b border-[#7a7a7a] pl-px">
        <div className="flex items-center gap-4 bg-[#757575] pl-5 pr-1 text-[#f0f0f0]">
          <span>MGF01.dwg*</span>
          <button aria-label="Close drawing"><Cross /></button>
        </div>
        <button aria-label="Drawings list" className="ml-auto pr-2"><Caret /></button>
      </div>
      <div className="flex flex-1 flex-col border-x-2 border-[#7a7a7a]">
        <Viewport />
      </div>
      <div className="flex h-[23px] items-stretch border-2 border-[#7a7a7a] text-[#b4b4b4]">
        <button aria-label="Layout list" className="px-[2px]"><Svg w={16} h={16}><rect x="0.5" y="1" width="15" height="14" fill="#3c3c3c" stroke="#eee" /><rect x="1" y="5" width="14" height="3" fill={BLUE} stroke="none" /><path d="M1 4.5H15M1 9.5H15" stroke="#eee" /></Svg></button>
        <button className="ml-4 bg-[#7a7a7a] px-2 leading-4 text-white">Model</button>
        <button className="border-b border-r border-[#7a7a7a] px-[7px] leading-4">Layout1</button>
        <button className="border-b border-r border-[#7a7a7a] px-[7px] leading-4">Layout2</button>
      </div>
    </main>
  );
}

/* ---------- command line and status bar ---------- */

function CommandLine() {
  return (
    <section className="flex h-[71px] shrink-0 border-t-4 border-[#525252] bg-[#4b4b4b] pl-px">
      <div className="flex w-[17px] flex-col items-center gap-2 overflow-hidden bg-[#979797] pt-[3px] text-white">
        <button aria-label="Close command line"><Cross /></button>
        <button aria-label="Pin command line"><Pin /></button>
        <span className="h-[34px] rotate-180 overflow-hidden text-right leading-[15px] [writing-mode:vertical-rl]">Comr</span>
      </div>
      <div className="flex min-w-0 flex-1 flex-col bg-[#5b5b5b] font-['DejaVu_Sans_Mono',monospace] text-[22px] leading-7 text-[#e6e6e2]">
        <div className="flex h-[37px] flex-col justify-end overflow-hidden border-b border-[#4a4a4a] pl-[3px]">
          <p className="whitespace-pre">CLOSE - Close document</p>
          <p className="whitespace-pre">AutoSaving: C:\Users\hexsp\AppData\Local\Temp\MGF01.dwg(I__Add-Ins Development_..._Test CAD Files)(09-55-24 PM_12-10-2026).autosave</p>
        </div>
        <div className="flex flex-1 items-center gap-1 border-t border-[#6c6c6c] pl-[3px]">
          <label htmlFor="command">Command:</label>
          <input id="command" defaultValue="l" className="min-w-0 flex-1 bg-transparent outline-none" />
        </div>
      </div>
    </section>
  );
}

const Toggle = ({ name, on, children, className }) => (
  <button
    aria-label={name}
    aria-pressed={!!on}
    className={clsx('flex h-5 shrink-0 items-center justify-center border', on ? 'border-[#4f94e6] bg-[#50698a]' : 'border-transparent border-r-[#646464]', className || 'w-[29px]')}
  >
    <Svg>{children}</Svg>
  </button>
);

const Magnet = ({ x, y }) => <path transform={`translate(${x} ${y})`} d="M1 7V4Q1 1 4 1Q7 1 7 4V7" stroke={BLUE} strokeWidth="2.6" />;

function StatusBar() {
  return (
    <footer className="flex h-6 shrink-0 items-center bg-[#4b4b4b] text-[#efefef]">
      <span className="w-[162px] whitespace-nowrap pl-[3px]">14493.5040,9583.5269,0.0000</span>
      <Toggle name="Snap"><g fill="#e0e0e0" stroke="none">{[1, 6, 11].map((x) => [1, 6, 11].map((y) => <rect key={x + '-' + y} x={x + 1} y={y + 1} width="3" height="3" />))}</g></Toggle>
      <Toggle name="Grid"><path d="M5.5 1V15M10.5 1V15M1 5.5H15M1 10.5H15" strokeWidth="1.2" /></Toggle>
      <Toggle name="Object snap" on><path d="M6 14H1.5V2H14V6" /><Magnet x={7} y={7} /></Toggle>
      <Toggle name="3D snap" on><path d="M5 14H1.5V5H12V7M1.5 5L5 1.5H15V5M12 5L15 1.5" /><Magnet x={7} y={7} /></Toggle>
      <Toggle name="Object tracking" on><path d="M1 14.5H15" /><path d="M3 12L14 2" strokeDasharray="2 2" /><circle cx="7" cy="9" r="1.5" stroke={BLUE} /></Toggle>
      <Toggle name="Polar"><circle cx="7" cy="9" r="6" /><path d="M7 9L15 1M7 9H16" /><path d="M9 7Q11 8 10.5 10" /></Toggle>
      <Toggle name="Ortho"><path d="M1.5 1V14.5H15M1.5 9.5H6.5V14.5" strokeWidth="1.2" /></Toggle>
      <Toggle name="Dynamic input"><path d="M5 1V11M0 6H10" /><rect x="8" y="9" width="8" height="5" fill="#bbb" stroke="#eee" /></Toggle>
      <Toggle name="Isolate"><path d="M8 1V15" stroke={BLUE} /><path d="M2 2L14 14" stroke={ORANGE} /><path d="M5 8H11" stroke={BLUE} /></Toggle>
      <span className="w-[5px]" />
      <Toggle name="Lineweight"><path d="M1 3H15" /><path d="M1 7H12" strokeWidth="2" /><path d="M1 12H15" strokeWidth="3" /></Toggle>
      <Toggle name="Transparency" on><rect x="1.5" y="1.5" width="13" height="13" /><path d="M2 7L7 2M2 12L12 2M4 14L14 4M9 14L14 9" stroke={BLUE} /></Toggle>
      <div className="ml-auto flex items-center">
        <button>MODEL</button>
        <Toggle name="Viewport lock" className="w-6"><path d="M2 14V2H11V6" stroke="#8a8a8a" strokeWidth="2" /><rect x="7" y="8" width="8" height="6" fill="#999" stroke="none" /><path d="M9 8V5.5H13V8" stroke="#999" /></Toggle>
        <button className="flex h-[14px] w-[14px] items-center justify-center border border-[#e0e0e0] bg-[#777] font-semibold">M</button>
        <span className="w-[97px]" />
        <Toggle name="Annotation monitor" className="w-[22px]"><BulbShape x={0} y={0} s={0.75} /><path d="M9 2H14V6M3 12V14H8" /><Cursor x={9} y={5} s={0.75} /></Toggle>
        <Toggle name="Hide objects" className="w-[22px]"><BulbShape x={3} y={1} fill="#dadada" /></Toggle>
        <Toggle name="Quick properties" on><rect x="0" y="1" width="6" height="5" fill="#999" stroke="none" /><rect x="0" y="8" width="6" height="6" fill={BLUE} stroke="none" /><Cursor x={9} y={5} s={0.75} /></Toggle>
        <Toggle name="Selection cycling" on><Cursor x={2} y={1} s={0.8} /><rect x="9" y="9" width="6" height="5" fill="#50698a" /><path d="M10 11.5H14" /></Toggle>
        <Toggle name="Tables"><rect x="3" y="1.5" width="11" height="13" /><path d="M5 4.5H6.5M8 4.5H12M5 8H6.5M8 8H12M5 11.5H6.5M8 11.5H12" /></Toggle>
        <Toggle name="Dynamic UCS" on><path d="M2 1V13H15M2 13L6 9M0.5 3L2 1L3.5 3M13 11.5L15 13L13 14.5" /><Bolt x={8} y={1} fill="#e6e6e6" /></Toggle>
        <button className="whitespace-nowrap pl-[10px] pr-3">m1'-0" = 1'-0"</button>
        <Toggle name="Pan"><path d="M4 15L1 9L2 8L4 10V3L5.5 3V8L6 1.5H7.5V8L9 2H10.5L10 8.5L12 4.5L13.2 5L12 12L11 15Z" fill="#eee" stroke="none" /></Toggle>
        <Toggle name="Zoom"><circle cx="6.5" cy="6.5" r="4.5" /><path d="M10 10L15 15" strokeWidth="2" /></Toggle>
        <Toggle name="Zoom window"><rect width="16" height="16" fill={BLUE} stroke="none" /><circle cx="7.5" cy="7" r="4" stroke="#333" /><path d="M10.5 10L14 14" stroke="#333" strokeWidth="1.8" /></Toggle>
        <Toggle name="Zoom extents"><rect x="1" y="1" width="13" height="13" stroke={BLUE} /><circle cx="7" cy="7" r="4" /><path d="M10 10L15 15" strokeWidth="1.8" /></Toggle>
        <Toggle name="Orbit"><ellipse cx="8" cy="9" rx="7" ry="3.5" /><path d="M8 0V16M6 3L8 1L10 3" /></Toggle>
        <Toggle name="Sync" className="w-[27px]"><circle cx="8" cy="8" r="6" stroke={BLUE} strokeWidth="1.6" strokeDasharray="7 2.4" /><path d="M11 0.5L14.5 3L11 5.5ZM5 10.5L1.5 13L5 15.5Z" fill={BLUE} stroke="none" /></Toggle>
        <Toggle name="Lock interface" className="w-[27px]"><rect x="0.5" y="1" width="7" height="5" /><path d="M3 8H6" /><rect x="6" y="9" width="9" height="7" fill={ORANGE} stroke="none" /><path d="M8.5 4H13V9" stroke={ORANGE} /></Toggle>
        <Toggle name="Full screen" className="w-6"><rect x="0.5" y="1.5" width="15" height="13" /><path d="M3 6V4H5M11 4H13V6M13 10V12H11M5 12H3V10" /><path d="M4 5L6 7M12 5L10 7M4 11L6 9M12 11L10 9" /></Toggle>
      </div>
    </footer>
  );
}

export default function App() {
  return (
    <div className="flex h-screen flex-col overflow-hidden bg-[#4b4b4b] font-['Open_Sans',sans-serif] text-[11px] text-[#e8e8e8]">
      <TopBar />
      <Ribbon />
      <div className="flex min-h-0 flex-1 pb-1 pt-px">
        <Sidebar />
        <Workspace />
      </div>
      <CommandLine />
      <StatusBar />
    </div>
  );
}
